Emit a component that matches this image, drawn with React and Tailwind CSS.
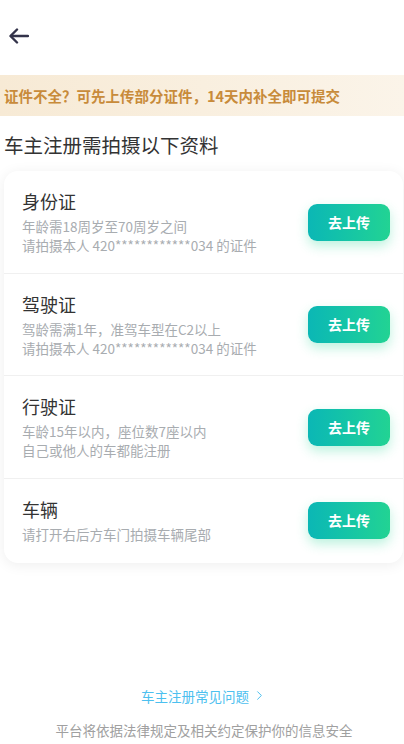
import { ChevronRight } from "lucide-react";

const items = [
  {
    title: "身份证",
    lines: ["年龄需18周岁至70周岁之间", "请拍摄本人 420************034 的证件"],
  },
  {
    title: "驾驶证",
    lines: ["驾龄需满1年，准驾车型在C2以上", "请拍摄本人 420************034 的证件"],
  },
  {
    title: "行驶证",
    lines: ["车龄15年以内，座位数7座以内", "自己或他人的车都能注册"],
  },
  {
    title: "车辆",
    lines: ["请打开右后方车门拍摄车辆尾部"],
  },
];

const UploadRow = ({ item, last }) => (
  <div className={`flex items-center justify-between pl-[18px] pr-[13px] pt-[18px] ${last ? "pb-[19px]" : "pb-[17.5px] border-b border-[#f0f0f0]"}`}>
    <div>
      <div className="text-[18px] leading-[24px] text-[#333]">{item.title}</div>
      <div className="mt-[4px]">
        {item.lines.map((l) => (
          <div key={l} className="text-[13.5px] leading-[19px] text-[#a8acb0]">
            {l}
          </div>
        ))}
      </div>
    </div>
    <button
      type="button"
      className="w-[82px] h-[37px] rounded-[9px] bg-gradient-to-r from-[#0bb7b5] to-[#22d393] text-white text-[14px] font-bold shadow-[0_5px_12px_rgba(34,211,147,0.3)]"
    >
      去上传
    </button>
  </div>
);

export default function App() {
  return (
    <div
      className="w-[404px] h-[744px] bg-white overflow-hidden flex flex-col"
      style={{ fontFamily: '"Noto Sans CJK SC", "Noto Sans", sans-serif' }}
    >
      {/* header */}
      <div className="h-[75px] flex items-center pl-[9px] pb-[3px]">
        <svg width="20" height="16" viewBox="0 0 20 16" fill="none" stroke="#33334a" strokeWidth="2.4" strokeLinecap="round" strokeLinejoin="round">
          <path d="M19 8H2" />
          <path d="M8 1.5L1.5 8L8 14.5" />
        </svg>
      </div>

      {/* notice */}
      <div className="h-[41px] flex items-center pl-[4px] bg-gradient-to-r from-[#f7ead5] to-[#fbf4e9]">
        <span className="text-[14.5px] font-bold text-[#c88b3a]">证件不全？可先上传部分证件，14天内补全即可提交</span>
      </div>

      <div className="pl-[4px] pt-[16px] text-[19.5px] leading-[26px] text-[#333]">车主注册需拍摄以下资料</div>

      <div className="ml-[4px] mr-[1px] mt-[13px] bg-white rounded-[14px] shadow-[0_2px_14px_rgba(0,0,0,0.07)]">
        {items.map((item, i) => (
          <UploadRow key={item.title} item={item} last={i === items.length - 1} />
        ))}
      </div>

      <div className="mt-auto flex flex-col items-center pb-[4px] pl-[4px]">
        <div className="flex items-center text-[13.5px] text-[#4cc0ef]">
          车主注册常见问题
          <ChevronRight size={15} strokeWidth={1.6} className="ml-[3px]" />
        </div>
        <div className="mt-[14px] text-[13.5px] leading-[20px] text-[#a0a0a0]">平台将依据法律规定及相关约定保护你的信息安全</div>
      </div>
    </div>
  );
}
